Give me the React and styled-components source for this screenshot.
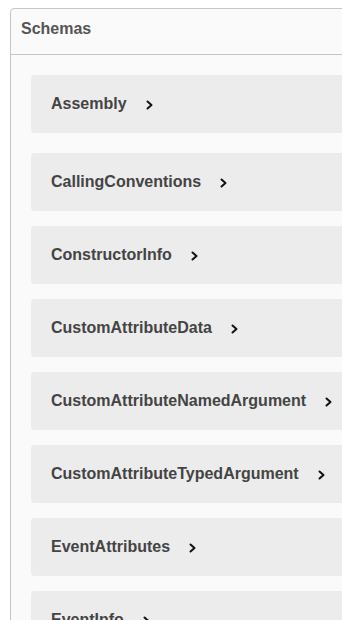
import React from "react";
import styled, { createGlobalStyle } from "styled-components";

const GlobalStyle = createGlobalStyle`
  body {
    margin: 0;
    background: #fff;
    overflow: hidden;
    font-family: "Liberation Sans", Arial, sans-serif;
  }
`;

const Section = styled.section`
  margin: 8px 0 0 10px;
  width: 440px;
  border: 1px solid #c6c6c6;
  border-radius: 4px;
  background: #fafafa;
`;

const Header = styled.h4`
  margin: 0;
  box-sizing: border-box;
  height: 46px;
  padding: 12px 10px 0;
  border-bottom: 1px solid #c6c6c6;
  font-size: 16px;
  line-height: 16px;
  font-weight: 700;
  color: #555;
`;

const List = styled.div`
  padding-bottom: 20px;
`;

const Model = styled.div`
  display: flex;
  align-items: center;
  height: 58px;
  margin: 0 20px 15px;
  padding: 0 20px;
  background: #ececec;
  border-radius: 4px;
  &:first-child {
    margin: 20px;
  }
`;

const Title = styled.span`
  font-size: 16px;
  font-weight: 700;
  color: #444;
`;

const Arrow = styled.svg`
  margin-left: 19px;
  margin-top: 2px;
  flex: none;
`;

const MODELS = [
  "Assembly",
  "CallingConventions",
  "ConstructorInfo",
  "CustomAttributeData",
  "CustomAttributeNamedArgument",
  "CustomAttributeTypedArgument",
  "EventAttributes",
  "EventInfo",
  "Exception"
];

const Chevron = () => (
  <Arrow width="8" height="10" viewBox="0 0 8 10">
    <path
      d="M1.5 1.5 L5.5 5 L1.5 8.5"
      fill="none"
      stroke="#111"
      strokeWidth="2"
      strokeLinecap="round"
      strokeLinejoin="round"
    />
  </Arrow>
);

const App = () => (
  <>
    <GlobalStyle />
    <Section>
      <Header>Schemas</Header>
      <List>
        {MODELS.map(name => (
          <Model key={name}>
            <Title>{name}</Title>
            <Chevron />
          </Model>
        ))}
      </List>
    </Section>
  </>
);

export default App;
